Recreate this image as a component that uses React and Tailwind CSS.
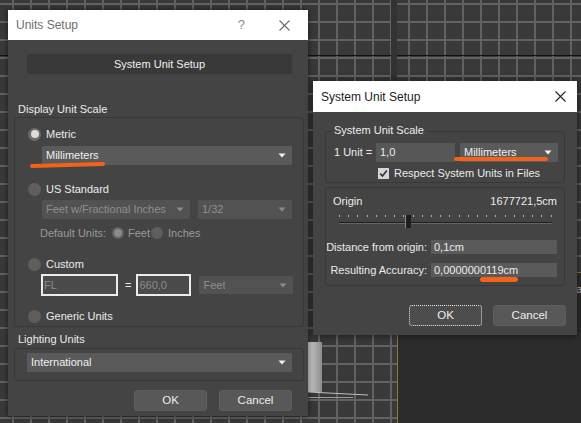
import React from "react";

const Arrow = ({ dim }) => (
  <svg width="8" height="5" viewBox="0 0 8 5" className="shrink-0">
    <path d="M0.5 0.5 L7.5 0.5 L4 4.5 Z" fill={dim ? "#8a8a8a" : "#f2f2f2"} />
  </svg>
);

const Dropdown = ({ text, dim, className }) => (
  <div
    className={
      "flex items-center justify-between pl-[4px] pr-[6px] rounded-[1px] " +
      (dim ? "bg-[#525252] text-[#8e8e8e] " : "bg-[#5a5a5a] text-[#f0f0f0] ") +
      className
    }
  >
    <span className="truncate">{text}</span>
    <Arrow dim={dim} />
  </div>
);

const Radio = ({ checked, dim, size = "w-[13px] h-[13px]" }) => {
  if (checked) {
    return (
      <div
        className={
          size +
          " rounded-full flex items-center justify-center shrink-0 " +
          (dim ? "bg-[#626262]" : "bg-[#6c6c6c]")
        }
      >
        <div
          className={
            "w-[8px] h-[8px] rounded-full " + (dim ? "bg-[#8a8a8a]" : "bg-[#dcdcdc]")
          }
        />
      </div>
    );
  }
  return <div className={size + " rounded-full bg-[#5e5e5e] shrink-0"} />;
};

const RadioRow = ({ checked, label, className }) => (
  <div className={"flex items-center h-[14px] gap-[5px] ml-[13px] " + className}>
    <Radio checked={checked} />
    <span className="text-[#ececec] leading-[14px]">{label}</span>
  </div>
);

const CloseX = ({ color }) => (
  <svg width="11" height="11" viewBox="0 0 11 11">
    <path d="M0.5 0.5 L10.5 10.5 M10.5 0.5 L0.5 10.5" stroke={color} strokeWidth="1.1" fill="none" />
  </svg>
);

const Btn = ({ children, focus, className }) => (
  <div
    className={
      "w-[73px] h-[21px] rounded-[3px] flex items-center justify-center text-[#ededed] text-[11.5px] " +
      (focus
        ? "bg-[#4d4d4d] border border-dotted border-[#e8e8e8] "
        : "bg-[#585858] border border-[#5e5e5e] ") +
      (className || "")
    }
  >
    {children}
  </div>
);

const SliderDots = () => {
  const dots = [];
  for (let i = 0; i < 24; i++) dots.push(i);
  return (
    <div className="flex justify-between w-[213px] h-[2px]">
      {dots.map((d) => (
        <div key={d} className="w-[1px] h-[2px] bg-[#b0b0b0]" />
      ))}
    </div>
  );
};

export default function App() {
  return (
    <div className="relative w-[581px] h-[423px] overflow-hidden bg-[#393939] [background-image:linear-gradient(#626262_2px,transparent_2px),linear-gradient(90deg,#626262_2px,transparent_2px)] [background-size:18px_18px] [background-position:12px_3px] font-['Liberation_Sans',Arial,sans-serif] text-[11px] text-[#ececec]">
      {/* viewport decorations */}
      <div className="absolute left-0 right-0 top-[55px] h-[1px] bg-[#111]" />
      <div className="absolute left-[391px] top-0 w-[6px] h-[272px] bg-[#333]" />
      <div className="absolute left-[397px] top-[272px] right-0 bottom-0 bg-[#2c2c2c] border-l border-t border-[#8a7a3c]">
        <div className="absolute right-[-1px] top-[8px] text-[#bbb] text-[11px]">a</div>
      </div>
      <div className="absolute left-[308px] top-[342px] w-[14px] h-[50px] bg-[linear-gradient(90deg,#cfcfcf,#8c8c8c)]" />
      <div className="absolute left-[308px] top-[393px] w-[60px] h-[1px] bg-[#bdbdbd] rotate-[3deg]" />
      <div className="absolute left-[308px] top-[397px] w-[45px] h-[1px] bg-[#9a9a9a]" />

      {/* Units Setup window */}
      <div className="absolute left-[8px] top-[10px] w-[300px] h-[406px] flex flex-col shadow-[0_0_6px_rgba(0,0,0,0.6)]">
        <div className="h-[30px] bg-white flex items-center pl-[8px] shrink-0">
          <span className="text-[12px] text-[#6e6e6e] flex-1">Units Setup</span>
          <span className="text-[13px] text-[#8a8a8a] mr-[34px]">?</span>
          <div className="mr-[18px] flex items-center">
            <CloseX color="#6a6a6a" />
          </div>
        </div>
        <div className="flex-1 bg-[#444444] flex flex-col">
          <div className="mt-[14px] ml-[19px] w-[265px] h-[20px] bg-[#393939] rounded-[2px] flex items-center justify-center text-[#f0f0f0]">
            System Unit Setup
          </div>
          <div className="mt-[29px] ml-[10px] h-[13px] leading-[13px]">Display Unit Scale</div>
          <div className="mt-[1px] ml-[6px] w-[290px] h-[210px] border border-[#383838] rounded-[3px] flex flex-col">
            <RadioRow checked label="Metric" className="mt-[9px]" />
            <Dropdown text="Millimeters" className="mt-[5px] ml-[27px] w-[250px] h-[19px]" />
            <RadioRow label="US Standard" className="mt-[17px]" />
            <div className="mt-[4px] ml-[27px] flex gap-[8px] h-[19px]">
              <Dropdown dim text="Feet w/Fractional Inches" className="w-[148px] h-[19px]" />
              <Dropdown dim text="1/32" className="w-[94px] h-[19px]" />
            </div>
            <div className="mt-[7px] ml-[25px] flex items-center h-[14px] text-[#9a9a9a]">
              <span>Default Units:</span>
              <div className="ml-[6px]">
                <Radio checked dim size="w-[12px] h-[12px]" />
              </div>
              <span className="ml-[4px]">Feet</span>
              <div className="ml-[1px]">
                <Radio size="w-[12px] h-[12px]" />
              </div>
              <span className="ml-[5px]">Inches</span>
            </div>
            <RadioRow label="Custom" className="mt-[17px]" />
            <div className="mt-[3px] ml-[26px] flex items-center h-[22px]">
              <div className="w-[77px] h-[22px] border-2 border-[#ececec] bg-[#4b4b4b] text-[#8a8a8a] pl-[1px] leading-[18px]">
                FL
              </div>
              <span className="ml-[7px] mr-[5px] text-[#ececec]">=</span>
              <div className="w-[55px] h-[22px] border-2 border-[#ececec] bg-[#4b4b4b] text-[#8a8a8a] pl-[1px] leading-[18px] overflow-hidden">
                660,0
              </div>
              <Dropdown dim text="Feet" className="ml-[8px] w-[94px] h-[18px]" />
            </div>
            <RadioRow label="Generic Units" className="mt-[13px]" />
          </div>
          <div className="mt-[6px] ml-[10px] h-[13px] leading-[13px]">Lighting Units</div>
          <div className="mt-[2px] ml-[6px] w-[290px] h-[33px] border border-[#383838] rounded-[3px] flex flex-col">
            <Dropdown text="International" className="mt-[4px] ml-[12px] w-[265px] h-[19px]" />
          </div>
          <div className="mt-[9px] flex justify-end gap-[12px] pr-[16px]">
            <Btn>OK</Btn>
            <Btn>Cancel</Btn>
          </div>
        </div>
      </div>

      {/* System Unit Setup window */}
      <div className="absolute left-[313px] top-[81px] w-[264px] h-[254px] flex flex-col shadow-[0_0_8px_rgba(0,0,0,0.6)]">
        <div className="h-[31px] bg-white flex items-center pl-[8px] shrink-0">
          <span className="text-[12px] text-[#1c1c1c] flex-1">System Unit Setup</span>
          <div className="mr-[11px] flex items-center">
            <CloseX color="#222" />
          </div>
        </div>
        <div className="flex-1 bg-[#444444] flex flex-col">
          <div className="relative mt-[19px] ml-[12px] w-[240px] h-[52px] border border-[#383838] rounded-[3px] flex flex-col">
            <div className="absolute top-[-8px] left-[6px] px-[2px] bg-[#444444] leading-[13px]">
              System Unit Scale
            </div>
            <div className="mt-[11px] flex items-center h-[19px]">
              <span className="ml-[8px] w-[42px]">1 Unit =</span>
              <div className="w-[79px] h-[19px] bg-[#575757] pl-[4px] leading-[19px]">1,0</div>
              <Dropdown text="Millimeters" className="ml-[5px] w-[98px] h-[19px]" />
            </div>
            <div className="mt-[5px] ml-[52px] flex items-center h-[12px]">
              <div className="w-[11px] h-[11px] bg-[#d6d6d6] flex items-center justify-center">
                <svg width="9" height="9" viewBox="0 0 9 9">
                  <path d="M1.2 4.6 L3.5 7 L7.8 1.5" stroke="#333" strokeWidth="1.6" fill="none" />
                </svg>
              </div>
              <span className="ml-[5px]">Respect System Units in Files</span>
            </div>
          </div>
          <div className="mt-[4px] ml-[12px] w-[240px] h-[99px] border border-[#383838] rounded-[3px] flex flex-col">
            <div className="mt-[7px] mx-[7px] flex justify-between h-[13px] leading-[13px]">
              <span>Origin</span>
              <span>1677721,5cm</span>
            </div>
            <div className="relative mt-[6px] ml-[13px] w-[213px] h-[14px] flex flex-col">
              <div className="mt-[1px]">
                <SliderDots />
              </div>
              <div className="mt-[5px] h-[2px] bg-[#1f1f1f] border-b border-[#666]" />
              <div className="absolute left-[66px] top-[1px] w-[6px] h-[13px] bg-[#1e1e1e] border-l border-[#8a8a8a]" />
            </div>
            <div className="mt-[12px] flex items-center h-[14px]">
              <span className="w-[101px] text-right">Distance from origin:</span>
              <div className="ml-[4px] w-[126px] h-[14px] bg-[#5a5a5a] pl-[3px] leading-[14px]">0,1cm</div>
            </div>
            <div className="mt-[9px] flex items-center h-[14px]">
              <span className="w-[101px] text-right">Resulting Accuracy:</span>
              <div className="ml-[4px] w-[126px] h-[14px] bg-[#5a5a5a] pl-[3px] leading-[14px]">0,0000000119cm</div>
            </div>
          </div>
          <div className="mt-[19px] flex justify-end gap-[11px] pr-[11px]">
            <Btn focus>OK</Btn>
            <Btn>Cancel</Btn>
          </div>
        </div>
      </div>

      {/* orange annotation marks */}
      <div className="absolute left-[30px] top-[163px] w-[75px] h-[4px] rounded-full bg-[#f2621a] rotate-[-1.5deg]" />
      <div className="absolute left-[454px] top-[157px] w-[94px] h-[4px] rounded-full bg-[#f2621a]" />
      <div className="absolute left-[480px] top-[277px] w-[38px] h-[5px] rounded-full bg-[#f2621a]" />
    </div>
  );
}
